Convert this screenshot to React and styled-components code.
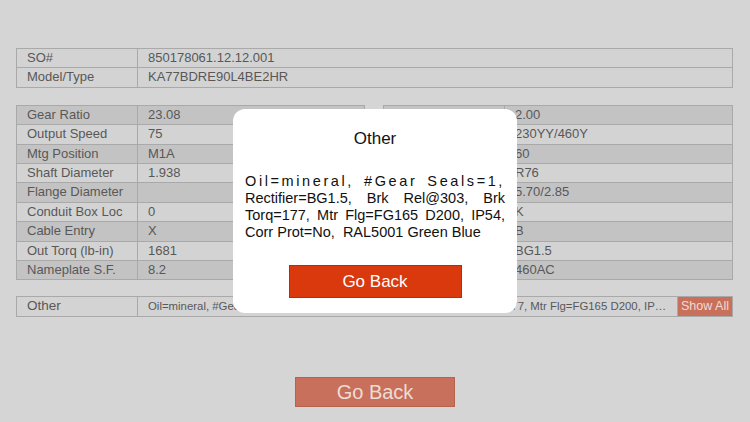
import styled, { createGlobalStyle } from "styled-components";

const GlobalStyle = createGlobalStyle`
  body {
    margin: 0;
    background: #d5d5d5;
    font-family: "Liberation Sans", Arial, sans-serif;
  }
`;

const Page = styled.div`
  width: 750px;
  height: 422px;
  box-sizing: border-box;
  padding: 48px 17px 0 16px;
  display: flex;
  flex-direction: column;
  overflow: hidden;
`;

const Table = styled.div`
  display: grid;
  grid-template-columns: ${(p) => p.$label || "121px"} 1fr ${(p) => (p.$action ? "55px" : "")};
  border-top: 1px solid #a9a9a9;
  border-left: 1px solid #a9a9a9;
  margin-bottom: ${(p) => p.$mb || "0"};
  min-width: 0;
`;

const Cell = styled.div`
  height: 18.4px;
  box-sizing: content-box;
  line-height: 18.4px;
  padding: 0 10px;
  border-right: 1px solid #a9a9a9;
  border-bottom: 1px solid #a9a9a9;
  background: ${(p) => (p.$dark ? "#c3c3c3" : "#d3d3d3")};
  color: #585858;
  font-size: ${(p) => p.$size || "13px"};
  white-space: nowrap;
  overflow: hidden;
  text-overflow: ellipsis;
  min-width: 0;
`;

const SideBySide = styled.div`
  display: grid;
  grid-template-columns: 349px 350px;
  column-gap: 18px;
  margin-bottom: 16px;
`;

const ShowAll = styled.div`
  height: 18.4px;
  line-height: 18.4px;
  background: #c9705c;
  color: #f1dbd3;
  font-size: 12.5px;
  text-align: center;
  border-right: 1px solid #a9a9a9;
  border-bottom: 1px solid #a9a9a9;
`;

const BottomButton = styled.div`
  align-self: center;
  margin-top: 60px;
  margin-left: 1px;
  width: 158px;
  height: 28px;
  line-height: 28px;
  background: #c8705b;
  border: 1px solid #b5634f;
  color: #eddcd5;
  font-size: 20px;
  text-align: center;
`;

const Backdrop = styled.div`
  position: fixed;
  inset: 0;
  display: flex;
  align-items: center;
  justify-content: center;
`;

const Modal = styled.div`
  width: 284px;
  height: 204px;
  box-sizing: border-box;
  background: #ffffff;
  border-radius: 12px;
  padding: 19px 12px 15px;
  display: flex;
  flex-direction: column;
`;

const Title = styled.div`
  font-size: 17px;
  line-height: 22px;
  text-align: center;
  color: #111;
`;

const Body = styled.div`
  margin-top: 23px;
  font-size: 14.5px;
  line-height: 17px;
  color: #111;
`;

const Line = styled.div`
  text-align: ${(p) => (p.$last ? "left" : "justify")};
  text-align-last: ${(p) => (p.$last ? "left" : "justify")};
  letter-spacing: ${(p) => p.$spacing || "0"};
  white-space: nowrap;
`;

const RedButton = styled.div`
  margin: 24px auto 0;
  width: 171px;
  height: 31px;
  line-height: 31px;
  background: #d9390d;
  border: 1px solid #b32f0a;
  color: #ffffff;
  font-size: 17px;
  text-align: center;
`;

const leftRows = [
  ["Gear Ratio", "23.08"],
  ["Output Speed", "75"],
  ["Mtg Position", "M1A"],
  ["Shaft Diameter", "1.938"],
  ["Flange Diameter", ""],
  ["Conduit Box Loc", "0"],
  ["Cable Entry", "X"],
  ["Out Torq (lb-in)", "1681"],
  ["Nameplate S.F.", "8.2"],
];

const rightRows = [
  ["Motor HP", "2.00"],
  ["Voltage", "230YY/460Y"],
  ["Hz", "60"],
  ["Motor Size", "R76"],
  ["Brake Torque", "5.70/2.85"],
  ["Motor Options", "K"],
  ["Brake Voltage", "B"],
  ["Rectifier", "BG1.5"],
  ["Brake Supply", "460AC"],
];

const otherText =
  "Oil=mineral, #Gear Seals=1, Rectifier=BG1.5, Brk Rel@303, Brk Torq=177, Mtr Flg=FG165 D200, IP54, Corr Prot=No, RAL5001 Green Blue";

const InfoTable = ({ rows }) => (
  <Table>
    {rows.map(([label, value], i) => [
      <Cell key={label} $dark={i % 2 === 0}>{label}</Cell>,
      <Cell key={label + "v"} $dark={i % 2 === 0}>{value}</Cell>,
    ])}
  </Table>
);

export default function App() {
  return (
    <>
      <GlobalStyle />
      <Page>
        <Table $mb="17px">
          <Cell>SO#</Cell>
          <Cell>850178061.12.12.001</Cell>
          <Cell>Model/Type</Cell>
          <Cell>KA77BDRE90L4BE2HR</Cell>
        </Table>
        <SideBySide>
          <InfoTable rows={leftRows} />
          <InfoTable rows={rightRows} />
        </SideBySide>
        <Table $action>
          <Cell $size="13.5px">Other</Cell>
          <Cell $size="11.4px">{otherText}</Cell>
          <ShowAll>Show All</ShowAll>
        </Table>
        <BottomButton>Go Back</BottomButton>
      </Page>
      <Backdrop>
        <Modal>
          <Title>Other</Title>
          <Body>
            <Line $spacing="2.6px">Oil=mineral, #Gear Seals=1,</Line>
            <Line>Rectifier=BG1.5, Brk Rel@303, Brk</Line>
            <Line>Torq=177, Mtr Flg=FG165 D200, IP54,</Line>
            <Line $last>Corr Prot=No,&nbsp; RAL5001 Green Blue</Line>
          </Body>
          <RedButton>Go Back</RedButton>
        </Modal>
      </Backdrop>
    </>
  );
}
